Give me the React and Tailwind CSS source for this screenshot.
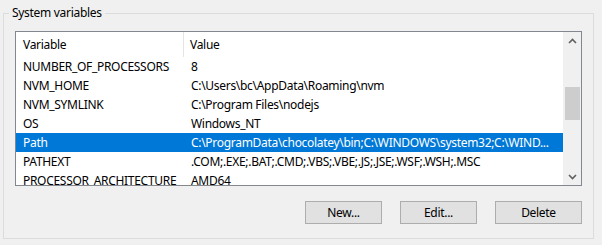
import React from "react";

const rows = [
  ["NUMBER_OF_PROCESSORS", "8"],
  ["NVM_HOME", "C:\\Users\\bc\\AppData\\Roaming\\nvm"],
  ["NVM_SYMLINK", "C:\\Program Files\\nodejs"],
  ["OS", "Windows_NT"],
  ["Path", "C:\\ProgramData\\chocolatey\\bin;C:\\WINDOWS\\system32;C:\\WIND..."],
  ["PATHEXT", ".COM;.EXE;.BAT;.CMD;.VBS;.VBE;.JS;.JSE;.WSF;.WSH;.MSC"],
  ["PROCESSOR_ARCHITECTURE", "AMD64"],
];

function Btn({ children, w }) {
  return (
    <div
      className={`${w} h-[23px] border border-[#adadad] bg-[#e1e1e1] flex items-center justify-center text-[12px] text-black`}
    >
      {children}
    </div>
  );
}

export default function App() {
  return (
    <div
      className="w-[602px] h-[245px] bg-[#f0f0f0] pt-[13px] pl-[3px] overflow-hidden tracking-[-0.3px]"
      style={{ fontFamily: '"Noto Sans", "Segoe UI", sans-serif' }}
    >
      <div className="relative w-[591px] h-[226px] border border-[#dcdcdc] pt-[17px] pl-[11px] pr-[11px]">
        <div className="absolute left-[5px] top-[-10px] px-[3px] bg-[#f0f0f0] text-[12px] leading-[18px] text-black">
          System variables
        </div>
        <div className="w-[567px] h-[155px] border border-[#828790] bg-white flex overflow-hidden">
          <div className="w-[547px] flex flex-col text-[12px] text-black">
            <div className="h-[25px] flex shrink-0 items-center">
              <div className="w-[168px] h-full flex items-center pl-[7px] border-r border-[#e5e5e5]">
                Variable
              </div>
              <div className="pl-[6px]">Value</div>
            </div>
            {rows.map(([k, v]) => {
              const sel = k === "Path";
              return (
                <div
                  key={k}
                  className={`h-[19px] shrink-0 flex items-center whitespace-nowrap ${
                    sel ? "bg-[#0078d7] text-white" : ""
                  }`}
                >
                  <div className="w-[168px] pl-[7px]">{k}</div>
                  <div className="pl-[7px]">{v}</div>
                </div>
              );
            })}
          </div>
          <div className="w-[18px] h-full bg-[#f0f0f0] flex flex-col">
            <div className="h-[17px] flex items-center justify-center">
              <svg width="9" height="6" viewBox="0 0 9 6">
                <path d="M1 5 L4.5 1.5 L8 5" stroke="#606060" strokeWidth="1.6" fill="none" />
              </svg>
            </div>
            <div className="flex-1 relative">
              <div className="absolute left-[2px] right-[1px] top-[38px] h-[33px] bg-[#cdcdcd]" />
            </div>
            <div className="h-[17px] flex items-center justify-center">
              <svg width="9" height="6" viewBox="0 0 9 6">
                <path d="M1 1 L4.5 4.5 L8 1" stroke="#606060" strokeWidth="1.6" fill="none" />
              </svg>
            </div>
          </div>
        </div>
        <div className="flex justify-end mt-[15px] gap-[18px]">
          <Btn w="w-[77px]">New...</Btn>
          <Btn w="w-[77px]">Edit...</Btn>
          <Btn w="w-[87px]">Delete</Btn>
        </div>
      </div>
    </div>
  );
}
